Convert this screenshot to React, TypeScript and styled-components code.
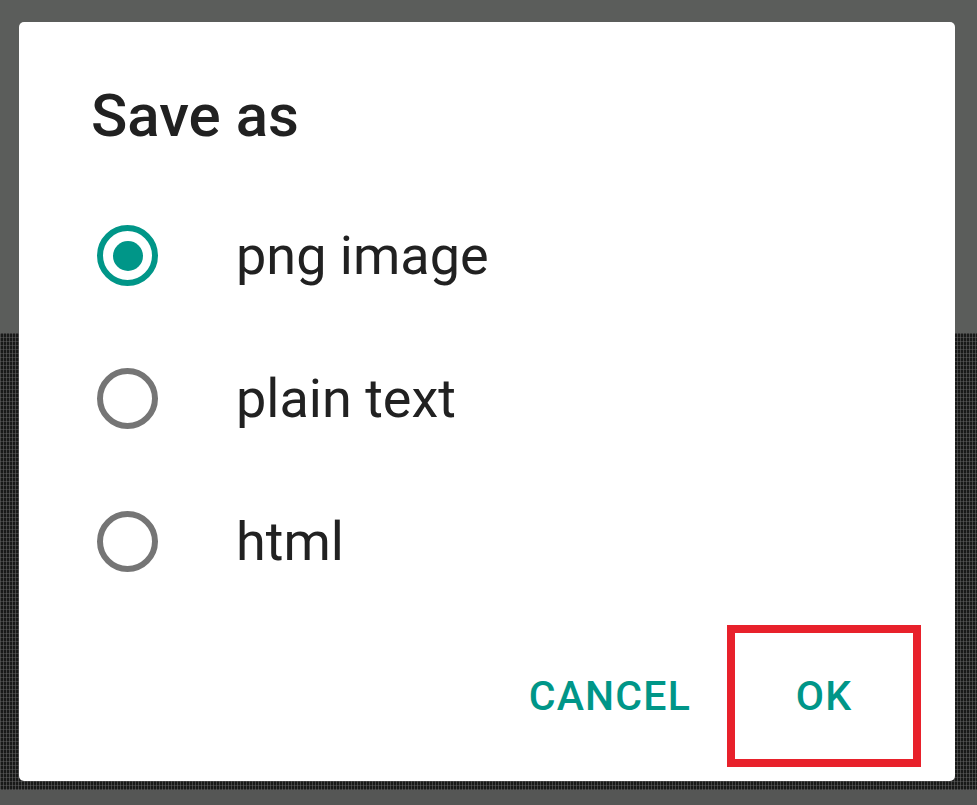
import React, { useState } from 'react';
import styled, { createGlobalStyle } from 'styled-components';

const GlobalStyle = createGlobalStyle`
  html, body {
    margin: 0;
    padding: 0;
    height: 100%;
  }
  body {
    min-height: 805px;
    font-family: Roboto, 'Liberation Sans', Arial, sans-serif;
    background-color: #5b5d5b;
    background-image:
      repeating-linear-gradient(90deg, rgba(110, 110, 110, 0.5) 0 1px, transparent 1px 3px),
      repeating-linear-gradient(0deg, rgba(110, 110, 110, 0.4) 0 1px, transparent 1px 4px),
      linear-gradient(#181918, #181918),
      linear-gradient(#555655, #555655);
    background-size: 100% 457px, 100% 457px, 100% 457px, 100% 20px;
    background-position: 0 333px, 0 333px, 0 333px, 0 790px;
    background-repeat: no-repeat;
  }
`;

const Screen = styled.div`
  padding: 22px 22px 0 19px;
`;

const Dialog = styled.div`
  width: 936px;
  box-sizing: border-box;
  background: #fff;
  border-radius: 5px;
  padding: 61px 42px 22px 72px;
  display: flex;
  flex-direction: column;
`;

const Title = styled.h1`
  margin: 0 0 35px;
  font-size: 60px;
  line-height: 66px;
  font-weight: 500;
  color: #212121;
`;

const Options = styled.div`
  display: flex;
  flex-direction: column;
`;

const Option = styled.label`
  height: 143px;
  display: flex;
  align-items: center;
  gap: 78px;
  padding-left: 6px;
  cursor: pointer;
`;

const RadioRing = styled.span<{ $checked: boolean }>`
  width: 61px;
  height: 61px;
  box-sizing: border-box;
  border-radius: 50%;
  border: 6px solid ${(p) => (p.$checked ? '#009688' : '#757575')};
  display: flex;
  align-items: center;
  justify-content: center;
  flex: none;
`;

const RadioDot = styled.span`
  width: 30px;
  height: 30px;
  border-radius: 50%;
  background: #009688;
`;

const OptionLabel = styled.span`
  font-size: 54px;
  line-height: 64px;
  color: #212121;
`;

const Footer = styled.div`
  margin-top: 20px;
  display: flex;
  justify-content: flex-end;
  align-items: center;
  gap: 22px;
`;

const TextButton = styled.button<{ $highlight?: boolean }>`
  position: relative;
  height: 126px;
  min-width: ${(p) => (p.$highlight ? '178px' : 'auto')};
  padding: 0 22px;
  border: none;
  background: transparent;
  font-family: Roboto, 'Liberation Sans', Arial, sans-serif;
  font-size: 41px;
  font-weight: 500;
  letter-spacing: 1.2px;
  color: #009688;
  cursor: pointer;

  &::after {
    content: '';
    display: ${(p) => (p.$highlight ? 'block' : 'none')};
    position: absolute;
    inset: -8px;
    border: 8px solid #e8212b;
  }
`;

const formats = ['png image', 'plain text', 'html'];

export default function App() {
  const [selected, setSelected] = useState(0);

  return (
    <>
      <GlobalStyle />
      <Screen>
        <Dialog>
          <Title>Save as</Title>
          <Options>
            {formats.map((label, i) => (
              <Option key={label} onClick={() => setSelected(i)}>
                <RadioRing $checked={selected === i}>
                  {selected === i && <RadioDot />}
                </RadioRing>
                <OptionLabel>{label}</OptionLabel>
              </Option>
            ))}
          </Options>
          <Footer>
            <TextButton>CANCEL</TextButton>
            <TextButton $highlight>OK</TextButton>
          </Footer>
        </Dialog>
      </Screen>
    </>
  );
}
